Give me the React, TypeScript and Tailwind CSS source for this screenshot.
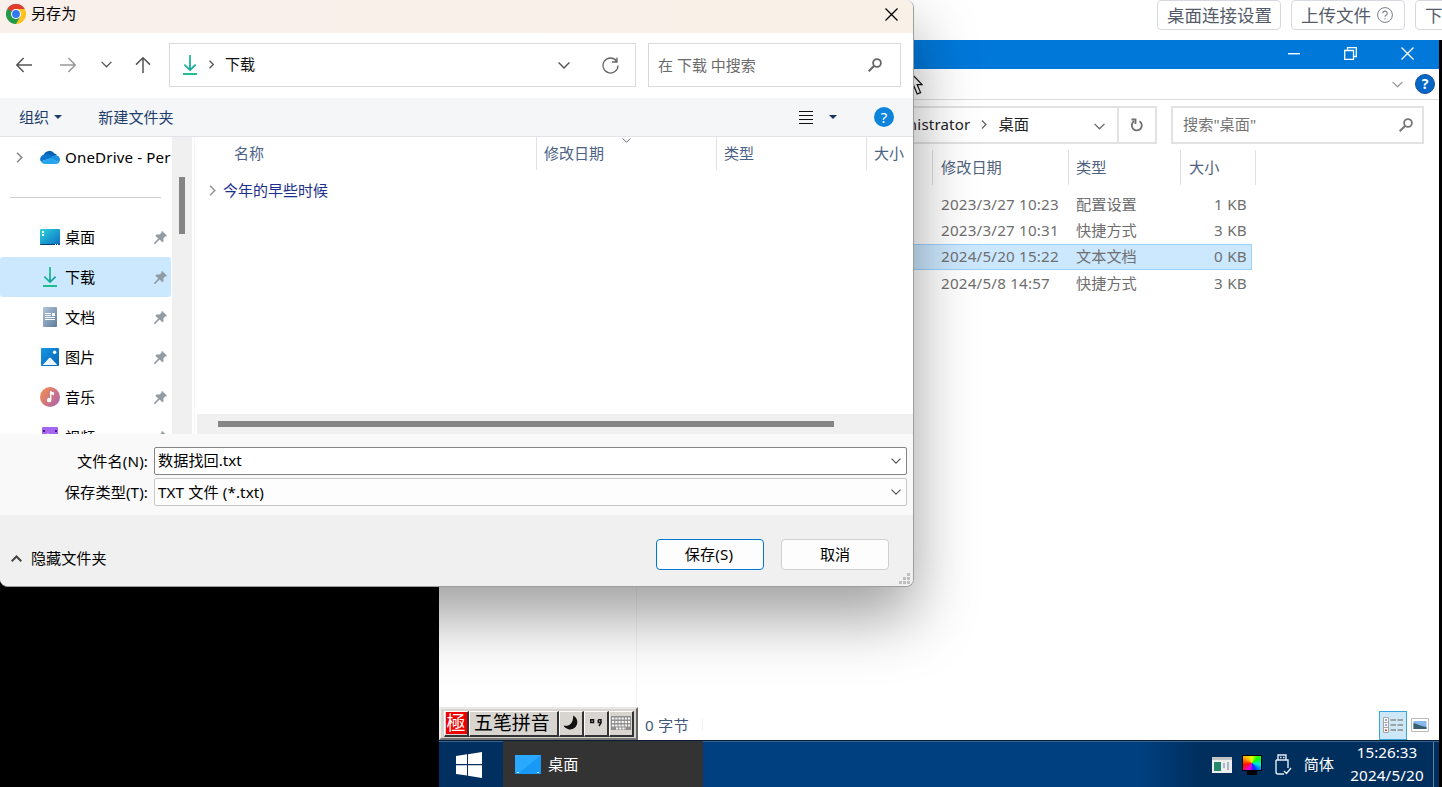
import type { ReactNode } from 'react'
import clsx from 'clsx'

type IconProps = { className?: string }

const quickAccess = [
	{ label: '桌面', icon: <DesktopIcon /> },
	{ label: '下载', icon: <DownloadIcon id="side" />, active: true },
	{ label: '文档', icon: <DocumentIcon /> },
	{ label: '图片', icon: <PictureIcon /> },
	{ label: '音乐', icon: <MusicIcon /> },
	{ label: '视频', icon: <VideoIcon /> },
]

const remoteFiles = [
	{ date: '2023/3/27 10:23', type: '配置设置', size: '1 KB' },
	{ date: '2023/3/27 10:31', type: '快捷方式', size: '3 KB' },
	{ date: '2024/5/20 15:22', type: '文本文档', size: '0 KB', active: true },
	{ date: '2024/5/8 14:57', type: '快捷方式', size: '3 KB' },
]

function ChevronDown({ className }: IconProps) {
	return (
		<svg viewBox="0 0 12 7" fill="none" stroke="currentColor" className={className}>
			<path d="M.6.6 6 6 11.4.6" strokeWidth="1.4" />
		</svg>
	)
}

function ChevronRight({ className }: IconProps) {
	return (
		<svg viewBox="0 0 7 12" fill="none" stroke="currentColor" className={className}>
			<path d="M.8.8 6 6 .8 11.2" strokeWidth="1.8" />
		</svg>
	)
}

function Arrow({ className }: IconProps) {
	return (
		<svg viewBox="0 0 16 16" fill="none" stroke="currentColor" strokeWidth="1.5" className={className}>
			<path d="M.8 8H16M7.6 1 .8 8l6.8 7" />
		</svg>
	)
}

function SearchIcon({ className }: IconProps) {
	return (
		<svg viewBox="0 0 14 14" fill="none" stroke="currentColor" className={className}>
			<circle cx="9" cy="5" r="3.9" strokeWidth="1.8" />
			<path d="M6.2 7.8.7 13.3" strokeWidth="2" />
		</svg>
	)
}

function Close({ className }: IconProps) {
	return (
		<svg viewBox="0 0 13 13" fill="none" stroke="currentColor" className={className}>
			<path d="m.5.5 12 12m0-12-12 12" strokeWidth="1.3" />
		</svg>
	)
}

function ChromeIcon() {
	return (
		<svg viewBox="0 0 48 48" className="size-5">
			<path d="M24 24 3.2 12A24 24 0 0 1 44.8 12Z" fill="#e33b2e" />
			<path d="M24 24 44.8 12A24 24 0 0 1 24 48Z" fill="#fcc31e" />
			<path d="M24 24v24A24 24 0 0 1 3.2 12Z" fill="#249a49" />
			<path d="M24 12h20.8L34.4 30Z" fill="#fcc31e" />
			<path d="M34.4 30 24 48 13.6 30Z" fill="#249a49" />
			<path d="M13.6 30 3.2 12 24 12Z" fill="#249a49" />
			<path d="M3.6 11.5A24 24 0 0 1 44.8 12H24a12 12 0 0 0-10.4 6Z" fill="#e33b2e" />
			<circle cx="24" cy="24" r="12" fill="#fff" />
			<circle cx="24" cy="24" r="9.5" fill="#3079f0" />
		</svg>
	)
}

function DownloadIcon({ id }: { id: string }) {
	return (
		<svg viewBox="0 0 20 20" className="size-5">
			<defs>
				<linearGradient id={id} x1="0" x2="1" y1="0" y2="1">
					<stop stopColor="#2fca8e" />
					<stop offset="1" stopColor="#0b9aa0" />
				</linearGradient>
			</defs>
			<path
				d="M9.100 0h1.800v13l4.100-4 1.300 1.300L10 16.300l-6.300-6L5 9l4.100 4Z"
				fill={`url(#${id})`}
			/>
			<path d="M3 18h14v2H3z" fill="#20bd91" />
		</svg>
	)
}

function DesktopIcon() {
	return (
		<svg viewBox="0 0 20 20" className="size-5">
			<defs>
				<linearGradient id="desk" x1="0" x2="1" y1="0" y2="1">
					<stop stopColor="#2fd3dc" />
					<stop offset="1" stopColor="#0a6cc4" />
				</linearGradient>
			</defs>
			<rect y="2" width="20" height="16" rx="1" fill="url(#desk)" />
			<path d="M2 4h2v2H2zm0 3h2v2H2z" fill="#fff" />
			<path d="M0 17h20v0a1 1 0 0 1-1 1H1a1 1 0 0 1-1-1Z" fill="#0b3c6e" />
			<path d="M15 17h1v1h-1zm2 0h1v1h-1z" fill="#fff" />
		</svg>
	)
}

function DocumentIcon() {
	return (
		<svg viewBox="0 0 20 20" className="size-5">
			<defs>
				<linearGradient id="doc" x1="0" x2="1" y1="0" y2="1">
					<stop stopColor="#b3c5d9" />
					<stop offset="1" stopColor="#5d7b9c" />
				</linearGradient>
			</defs>
			<rect x="3" width="14" height="20" rx="1" fill="url(#doc)" />
			<path d="M5 6h6v1H5zm0 2h6v1H5zm7-2h3v3h-3zM5 10h10v1H5zm0 2h10v1H5z" fill="#fff" />
		</svg>
	)
}

function PictureIcon() {
	return (
		<svg viewBox="0 0 20 20" className="size-5">
			<defs>
				<linearGradient id="pic" x1="0" x2="1" y1="0" y2="1">
					<stop stopColor="#1697e2" />
					<stop offset="1" stopColor="#0664b8" />
				</linearGradient>
			</defs>
			<rect x="1" y="1" width="18" height="18" rx="1" fill="url(#pic)" />
			<circle cx="14.6" cy="5.3" r="1.7" fill="#fff" />
			<path d="m2.6 18 6.6-7q.8-.8 1.6 0l6.6 7Z" fill="#edf5fd" />
		</svg>
	)
}

function MusicIcon() {
	return (
		<svg viewBox="0 0 20 20" className="size-5">
			<defs>
				<linearGradient id="music" x1="0" x2="1" y1=".3" y2="1">
					<stop stopColor="#f08a54" />
					<stop offset="1" stopColor="#a95fb4" />
				</linearGradient>
			</defs>
			<circle cx="10" cy="10" r="10" fill="url(#music)" />
			<path d="M10 4h1c.4 1 2 1.1 3 1.4v2.8l-2.6-.7V13a2.2 2.2 0 1 1-1.4-2z" fill="#fff" />
		</svg>
	)
}

function VideoIcon() {
	return (
		<svg viewBox="0 0 20 20" className="size-5">
			<rect x="2" width="16" height="20" rx="1" fill="#a466ee" />
			<path d="M3 3h2v2H3zm12 0h2v2h-2zM3 8h2v2H3zm12 0h2v2h-2z" fill="#4b1c86" />
			<path d="m7.5 6 6 4-6 4Z" fill="#fff" />
		</svg>
	)
}

function PinIcon({ className }: IconProps) {
	return (
		<svg viewBox="0 0 13 13" fill="#929ca4" className={className}>
			<path d="M8.2 0 13 4.7l-.8.7-.9-.1-2 2.2.2 2.7-1.2 1L5.600 8.600 1.200 13H0v-1l4.200-4.600L1.400 4.700l1-1.200 3 .1L7.600 1.700 7.400.7Z" />
		</svg>
	)
}

function OneDriveIcon() {
	return (
		<svg viewBox="0 0 20 14" className="h-[14px] w-5">
			<path d="M3.8 5A6 6 0 0 1 14.5 3.5 5 5 0 0 1 17 5l-7 4Z" fill="#0762b5" />
			<path d="M4 4.6a4.6 4.6 0 0 0-3.1 7L10 8.5l3-2.300C10 4.300 7 3.600 4 4.600Z" fill="#0c75cc" />
			<path d="M13 6c2-1.500 6.800-.7 7 3.500.1 1.200-.5 2-1 2.800L10 8.200Z" fill="#1b93e4" />
			<path d="M.9 11.600C2 13.500 3.500 14 5 14h11c1.500 0 2.500-.6 3.200-1.700L10.500 7.900Z" fill="#28a5ec" />
		</svg>
	)
}

function WebButton({ children, className }: { children: ReactNode; className?: string }) {
	return (
		<button
			className={clsx(
				'flex h-[30px] shrink-0 items-center rounded border border-[#d6d9df] bg-white pl-[9px] text-[17.5px] whitespace-nowrap text-[#555b69]',
				className,
			)}
		>
			{children}
		</button>
	)
}

function WebToolbar() {
	return (
		<header className="flex h-10 gap-2.5 bg-white pl-[1157px]">
			<WebButton className="w-[124px]">桌面连接设置</WebButton>
			<WebButton className="w-[114px] gap-[6px]">
				上传文件
				<svg viewBox="0 0 16 16" fill="none" stroke="#777d88" className="size-4">
					<circle cx="8" cy="8" r="7.4" />
					<path d="M5.8 6.3a2.2 2.2 0 1 1 3.2 2c-.8.4-1 .8-1 1.5M8 11.2v1.2" strokeWidth="1.1" />
				</svg>
			</WebButton>
			<WebButton className="w-[114px]">下</WebButton>
		</header>
	)
}

function RemoteExplorer() {
	return (
		<section className="flex h-[700px] flex-col bg-white">
			<div className="flex h-[29px] items-center justify-end bg-[#0078d9] pr-[25px] text-white">
				<svg viewBox="0 0 12 2" className="mr-[44px] mb-[2px] h-[2px] w-3">
					<path d="M0 0h12v1.400H0z" fill="#fff" />
				</svg>
				<svg viewBox="0 0 13 13" fill="none" stroke="#fff" strokeWidth="1.3" className="mr-[44px] mb-[3px] size-[13px]">
					<path d="M.7 3.5h8.800v8.800H.7zM3.500 3.500V.7h8.800v8.800H9.500" />
				</svg>
				<Close className="mb-[3px] size-[13px]" />
			</div>

			<div className="flex h-[31px] items-center justify-end border-b border-[#dcdcdc] pr-[4px]">
				<ChevronDown className="mr-[12px] h-[7px] w-[11px] text-[#999]" />
				<span className="flex size-5 items-center justify-center rounded-full border border-[#1b4f94] bg-[#0567c8] text-sm font-bold text-white">
					?
				</span>
			</div>

			<div className="flex items-center pt-[6px] text-[15px]">
				<div className="flex h-[38px] w-[718px] border-2 border-[#e2e2e2]">
					<div className="flex flex-1 items-center justify-end border-r-2 border-[#e2e2e2] pr-[12px] pb-[2px] text-[#222]">
						<span className="tracking-[0.2px]">nistrator</span>
						<ChevronRight className="mx-[11px] h-[9px] w-[6px] text-[#666]" />
						<span className="text-[15.3px]">桌面</span>
						<ChevronDown className="mt-[4px] ml-[65px] h-[7px] w-[11px] text-[#666]" />
					</div>
					<div className="flex w-[36px] items-center justify-center">
						<svg viewBox="0 0 14 14" fill="none" stroke="#707070" strokeWidth="1.8" className="size-[14px]">
							<path d="M9.5 3.2A5 5 0 1 1 4 3.300M1.500 1.500h4V6" />
						</svg>
					</div>
				</div>
				<div className="ml-[14px] flex h-[38px] w-[253px] items-center justify-between border-2 border-[#e2e2e2] pr-[9px] pb-[2px] pl-[10px] text-[15.2px] text-[#747474]">
					<span>搜索"桌面"</span>
					<SearchIcon className="mt-[2px] size-[14px] text-[#777]" />
				</div>
			</div>

			<div className="flex flex-1">
				<div className="w-[198px] border-r border-[#f3f3f3]" />
				<div className="flex-1 pt-[6px]">
					<div className="flex h-[35px] items-center pl-[295px] text-[15.2px] text-[#4f627e]">
						<span className="flex h-full w-[136px] items-center border-l border-[#e0e0e0] pl-[8px]">修改日期</span>
						<span className="flex h-full w-[112px] items-center border-l border-[#e0e0e0] pl-[7px]">类型</span>
						<span className="flex h-full w-[76px] items-center border-x border-[#e0e0e0] pl-[8px]">大小</span>
					</div>
					<div className="w-[615px] pt-[6px] text-[15.2px] text-[#6f6f6f]">
						{remoteFiles.map((file, i) => (
							<div
								key={i}
								className={clsx(
									'flex h-[26.3px] items-center border pl-[303px]',
									file.active ? 'border-[#99d1ff] bg-[#cce8ff]' : 'border-transparent',
								)}
							>
								<span className="w-[135px] tracking-[0.2px]">{file.date}</span>
								<span className="w-[100px]">{file.type}</span>
								<span className="flex-1 pr-[4px] text-right tracking-[0.3px]">{file.size}</span>
							</div>
						))}
					</div>
				</div>
			</div>

			<div className="flex h-[30px] items-center pr-[10px] pl-[206px] text-[15.2px] text-[#42597a]">
				<span className="mr-[13px] tracking-[0.2px]">0 字节</span>
				<span className="h-3 flex-1 border-l border-[#f0f0f0]" />
				<span className="flex h-[29px] w-[28px] items-center justify-center border border-[#38a4dc] bg-[#cce8f6]">
					<svg viewBox="0 0 20 17" className="h-[17px] w-5">
						<path d="M.5.5h5v5h-5zm0 5h5v5h-5zm0 5h5v5h-5z" fill="#fff" stroke="#a5a5a5" />
						<path d="M2 2.500h2v1H2z" fill="#448" />
						<path d="M2 7.500h2v1H2z" fill="#34f" />
						<path d="M2 12.500h2v1.500H2z" fill="#e33" />
						<path d="M7.500 3H13m1.500 0H20M7.500 8H13m1.500 0H20M7.500 13H13m1.500 0H20" stroke="#8a8a8a" strokeWidth="1.3" />
					</svg>
				</span>
				<svg viewBox="0 0 18 14" className="ml-[4px] h-[14px] w-[18px]">
					<path d="M.5.5h17v13H.5z" fill="#fff" stroke="#bbb" />
					<path d="M2.500 3h13v8h-13z" fill="#86b8ed" />
					<path d="M2.500 5c4 1 8 3.500 13 4v2h-13z" fill="#375f70" />
				</svg>
			</div>
		</section>
	)
}

function ImeKey({ children, className }: { children: ReactNode; className?: string }) {
	return (
		<span
			className={clsx(
				'flex h-[26px] items-center border-t border-r-2 border-b-2 border-l border-t-white border-r-[#333] border-b-[#333] border-l-white',
				className,
			)}
		>
			{children}
		</span>
	)
}

function ImeBar() {
	return (
		<div className="absolute top-[707px] left-[439px] flex h-[33px] w-[199px] items-center border-2 border-t-[#e8e8e8] border-r-[#666] border-b-[#777] border-l-[#eee] bg-[#d8d5d0] pl-[3px]">
			<ImeKey className="w-[25px] justify-center">
				<span className="flex h-[22px] w-[21px] items-center justify-center bg-[#f00000] text-[19px] leading-[22px] text-white">極</span>
			</ImeKey>
			<ImeKey className="w-[90px] pl-[4px] text-[18.9px] leading-none whitespace-nowrap text-black">五笔拼音</ImeKey>
			<ImeKey className="w-[25px] justify-center">
				<svg viewBox="0 0 16 16" className="size-4">
					<path d="M10 .5A7.300 7.300 0 1 1 .5 10.500C3 11 5 11 7 9.500 9.500 7.500 10.500 4 10 .5Z" fill="#111" />
				</svg>
			</ImeKey>
			<ImeKey className="w-[25px] justify-center">
				<svg viewBox="0 0 12 8" className="h-2 w-3">
					<path d="M.8.8h2.700v2.700H.8zM8.300.8H11v3L9 7M8.300.8v2.700H11" fill="none" stroke="#111" strokeWidth="1.5" />
				</svg>
			</ImeKey>
			<ImeKey className="w-[25px] justify-center">
				<svg viewBox="0 0 20 14" className="h-[14px] w-5">
					<path d="M0 0h20v14H0z" fill="#8f8f8f" />
					<path d="M1 2.500h18M1 6h18M1 9.500h18M5 12.500h10" stroke="#f5f5f5" strokeWidth="1.8" strokeDasharray="2.2 1" />
				</svg>
			</ImeKey>
		</div>
	)
}

function Taskbar() {
	return (
		<footer className="flex h-[47px] border-t border-[#0a1c33] bg-linear-to-r from-[#004080] from-70% to-[#002f5e] to-76% text-[15.2px] text-white">
			<div className="flex w-[64px] items-center justify-center border-t border-[#376391] bg-[#002f60] pr-1">
				<svg viewBox="0 0 26 26" fill="#fff" className="mt-px size-[26px]">
					<path d="M0 4 11 2.300V12H0zM12 2.200 26 0v12H12zM0 13.300h11V23.500L0 22zM12 13.300h14V26l-14-2.200z" />
				</svg>
			</div>
			<div className="flex w-[200px] items-center bg-[#333] pl-[12px]">
				<svg viewBox="0 0 26 19" className="h-[19px] w-[26px]">
					<path d="M0 0h26v19H0z" fill="#1899f5" />
					<path d="M0 0h26L4 18H0z" fill="#29a9ff" />
					<path d="M2 17.500h22" stroke="#cce8ff" strokeDasharray="2 18" />
				</svg>
				<span className="ml-[7px]">桌面</span>
			</div>
			<div className="flex flex-1 items-center justify-end border-t border-[#376391]">
				<svg viewBox="0 0 20 16" className="h-4 w-5">
					<path d="M0 0h20v16H0z" fill="#eee" />
					<path d="M0 0h20v3H0z" fill="#c4c4c4" />
					<path d="M2 5h7v9H2z" fill="#26896c" />
					<path d="M11 6h2v5h-2zm4-1h2v8h-2z" fill="#a5b8c5" />
				</svg>
				<div className="ml-[10px] w-5">
					<div className="h-[16px] border border-black bg-[conic-gradient(#e6ff00,#10ff00,#00e8e0,#0028ff,#f000e8,#ff1000,#ffb000,#e6ff00)]" />
					<div className="mx-auto h-[4px] w-2.5 bg-black" />
				</div>
				<svg viewBox="0 0 17 21" fill="none" stroke="#e4ecf4" strokeWidth="1.4" className="ml-[13px] h-[21px] w-[17px]">
					<path d="M3 6V1h8v5M1 6h12v8M1 6v12q0 2 2 2h6M5 3.500h1.500M8 3.500h1.500M9 17l2.500 2.500L16 14" />
				</svg>
				<span className="ml-[12px]">简体</span>
				<div className="ml-[15px] w-[76px] pb-px text-center leading-[23px] whitespace-nowrap">
					<div>15:26:33</div>
					<div className="tracking-[0.15px]">2024/5/20</div>
				</div>
				<div className="ml-[8px] h-full w-[6px] border-l border-[#5f7d9e]" />
			</div>
		</footer>
	)
}

function RemoteCursor() {
	return (
		<svg viewBox="0 0 14 24" className="absolute top-[71px] left-[909px] h-6 w-3.5">
			<path d="M.5.5v18l4.300-3.800 3.400 8.300 3.400-1.400-3.500-8H13Z" fill="#fff" stroke="#111" strokeWidth="1.2" />
		</svg>
	)
}

function AddressRow() {
	return (
		<div className="flex h-[65px] items-center bg-white pb-[2px] text-[15px]">
			<Arrow className="ml-[16px] size-4 text-[#555]" />
			<Arrow className="ml-[28px] size-4 rotate-180 text-[#999]" />
			<ChevronDown className="ml-[25px] h-[7px] w-[11px] text-[#555]" />
			<Arrow className="ml-[23px] size-4 rotate-90 text-[#555]" />
			<div className="ml-[18px] flex h-[44px] w-[467px] items-center border border-[#d9d9d9] pl-[10px]">
				<DownloadIcon id="address" />
				<ChevronRight className="ml-[9px] h-[9px] w-[5px] text-[#555]" />
				<span className="ml-[11px] flex-1 text-[#111]">下载</span>
				<ChevronDown className="mt-[2px] h-[7px] w-[12px] text-[#555]" />
				<svg viewBox="0 0 17 17" fill="none" stroke="#666" strokeWidth="1.3" className="mt-[2px] mr-[16px] ml-[32px] size-[17px]">
					<path d="M14.500 4A7.500 7.500 0 1 0 16 8.500M15 .5v4.500h-5" />
				</svg>
			</div>
			<div className="ml-[12px] flex h-[44px] w-[253px] items-center justify-between border border-[#d9d9d9] pr-[18px] pl-[9px] text-[#6b6b6b]">
				<span className="pt-px">在 下载 中搜索</span>
				<SearchIcon className="size-[14px] text-[#666]" />
			</div>
		</div>
	)
}

function FolderToolbar() {
	return (
		<div className="flex h-[39px] items-center border-b border-[#e1e5ea] bg-[#f4f6f8] pr-[19px] text-[15.1px] text-[#1e3d6b]">
			<span className="ml-[19px]">组织</span>
			<svg viewBox="0 0 8 4" className="ml-[5px] h-1 w-2">
				<path d="M0 0h8L4 4z" fill="#1e3d6b" />
			</svg>
			<span className="ml-[36px] flex-1">新建文件夹</span>
			<svg viewBox="0 0 14 13" className="h-[13px] w-[14px]">
				<path d="M0 .5h14M0 4.500h14M0 8.500h14M0 12.500h14" stroke="#111" />
			</svg>
			<svg viewBox="0 0 8 4" className="mr-[37px] ml-[16px] h-1 w-2">
				<path d="M0 0h8L4 4z" fill="#17335f" />
			</svg>
			<span className="flex size-5 items-center justify-center rounded-full bg-[#0c84dc] text-[15px] leading-none text-white">?</span>
		</div>
	)
}

function Sidebar() {
	return (
		<aside className="w-[171px] overflow-hidden text-[15.1px] text-black">
			<div className="flex h-10 items-center pl-[16px]">
				<ChevronRight className="h-[11px] w-[7px] text-[#888]" />
				<span className="mr-[5px] ml-[17px]">
					<OneDriveIcon />
				</span>
				<span className="tracking-[0.15px] whitespace-nowrap">OneDrive - Per</span>
			</div>
			<div className="mr-[10px] ml-[10px] flex h-10 items-center">
				<div className="h-px flex-1 bg-[#d0d0d0]" />
			</div>
			{quickAccess.map(item => (
				<div
					key={item.label}
					className={clsx('flex h-10 items-center rounded-[3px] pr-[4px] pl-10', item.active && 'bg-[#cce8ff]')}
				>
					{item.icon}
					<span className="ml-[5px] flex-1">{item.label}</span>
					<PinIcon className="size-[13px]" />
				</div>
			))}
		</aside>
	)
}

function FileList() {
	return (
		<div className="flex flex-1 flex-col text-[15px]">
			<div className="flex h-[33px] text-[#4b6285]">
				<span className="flex w-[341px] items-center pl-[39px]">名称</span>
				<span className="relative flex w-[180px] items-center border-l border-[#e2e2e2] pl-[7px]">
					修改日期
					<ChevronDown className="absolute top-[1px] left-[85px] h-[5px] w-[9px] text-[#666]" />
				</span>
				<span className="flex w-[150px] items-center border-l border-[#e2e2e2] pl-[7px]">类型</span>
				<span className="flex flex-1 items-center border-l border-[#e2e2e2] pl-[7px] whitespace-nowrap">大小</span>
			</div>
			<div className="flex flex-1 items-start pt-[9px] pl-[14px] text-[#1d2f8c]">
				<ChevronRight className="mt-[6px] mr-[7px] h-[11px] w-[7px] text-[#999]" />
				<span className="leading-[23px]">今年的早些时候</span>
			</div>
			<div className="ml-[2px] flex h-5 items-center bg-[#f0f0f0] pl-[21px]">
				<div className="h-[6px] w-[616px] bg-[#858585]" />
			</div>
		</div>
	)
}

function SaveDialog() {
	return (
		<div className="absolute top-0 left-0 flex h-[587px] w-[914px] flex-col overflow-hidden rounded-r-[8px] rounded-bl-[8px] border-r border-b border-[#9d9d9d] bg-[#f0f0f0] shadow-[0_30px_62px_rgba(0,0,0,0.38)]">
			<div className="flex h-[33px] items-center bg-linear-to-r from-[#f9f0ec] to-[#f9f1e7] pb-[5px] pl-[6px] text-[15.1px] text-black">
				<ChromeIcon />
				<span className="ml-[5px] flex-1 pb-px">另存为</span>
				<Close className="mr-[15px] size-[13px]" />
			</div>
			<AddressRow />
			<FolderToolbar />
			<div className="flex h-[297px] bg-white">
				<Sidebar />
				<div className="ml-px w-5 bg-[#f0f0f0] pt-10 pl-[7px]">
					<div className="h-[57px] w-[6px] bg-[#858585]" />
				</div>
				<div className="ml-[2px] w-px bg-[#f6f6f6]" />
				<FileList />
			</div>
			<div className="flex h-[81px] flex-col gap-[3px] bg-[#f9f9f9] pt-[13px] pr-[6px] text-[15.2px] text-black">
				<div className="flex h-7 items-center">
					<span className="w-[148px] text-right tracking-[0.1px] whitespace-nowrap">文件名(N):</span>
					<div className="ml-[6px] flex h-7 flex-1 items-center justify-between rounded-[2px] border border-[#858585] bg-white pr-[5px] pl-[3px]">
						<span className="pb-px">数据找回.txt</span>
						<ChevronDown className="h-[6px] w-[10px] text-[#555]" />
					</div>
				</div>
				<div className="flex h-7 items-center">
					<span className="w-[148px] text-right tracking-[0.1px] whitespace-nowrap">保存类型(T):</span>
					<div className="ml-[6px] flex h-7 flex-1 items-center justify-between rounded-[2px] border border-[#c8c8c8] bg-[#fdfdfd] pr-[5px] pl-[3px]">
						<span className="tracking-[0.1px]">TXT 文件 (*.txt)</span>
						<ChevronDown className="h-[6px] w-[10px] text-[#555]" />
					</div>
				</div>
			</div>
			<div className="flex flex-1 items-start bg-[#f0f0f0] pt-[24px] pr-[24px] text-[15.1px] text-black">
				<div className="flex h-[38px] flex-1 items-center pl-[11px]">
					<svg viewBox="0 0 11 7" fill="none" stroke="#444" strokeWidth="2" className="mr-[9px] h-[7px] w-[11px]">
						<path d="M.7 6.300 5.500 1.500l4.800 4.800" />
					</svg>
					隐藏文件夹
				</div>
				<button className="h-[31px] w-[108px] rounded border border-[#0078d4] bg-[#fdfdfd] pr-[2px] tracking-[0.15px]">保存(S)</button>
				<button className="ml-[17px] h-[31px] w-[108px] rounded border border-[#d0d0d0] bg-[#fdfdfd]">取消</button>
			</div>
			<svg viewBox="0 0 11 11" fill="#bfbfbf" className="absolute right-[3px] bottom-[2px] size-[11px]">
				<path d="M8 0h3v3H8zM4 4h3v3H4zm4 0h3v3H8zM0 8h3v3H0zm4 0h3v3H4zm4 0h3v3H8z" />
			</svg>
		</div>
	)
}

export default function App() {
	return (
		<div className="relative h-[787px] w-[1442px] overflow-hidden bg-black font-['Noto_Sans','Noto_Sans_CJK_SC',sans-serif]">
			<WebToolbar />
			<main className="ml-[439px] w-[1000px]">
				<RemoteExplorer />
				<Taskbar />
			</main>
			<ImeBar />
			<RemoteCursor />
			<SaveDialog />
		</div>
	)
}
